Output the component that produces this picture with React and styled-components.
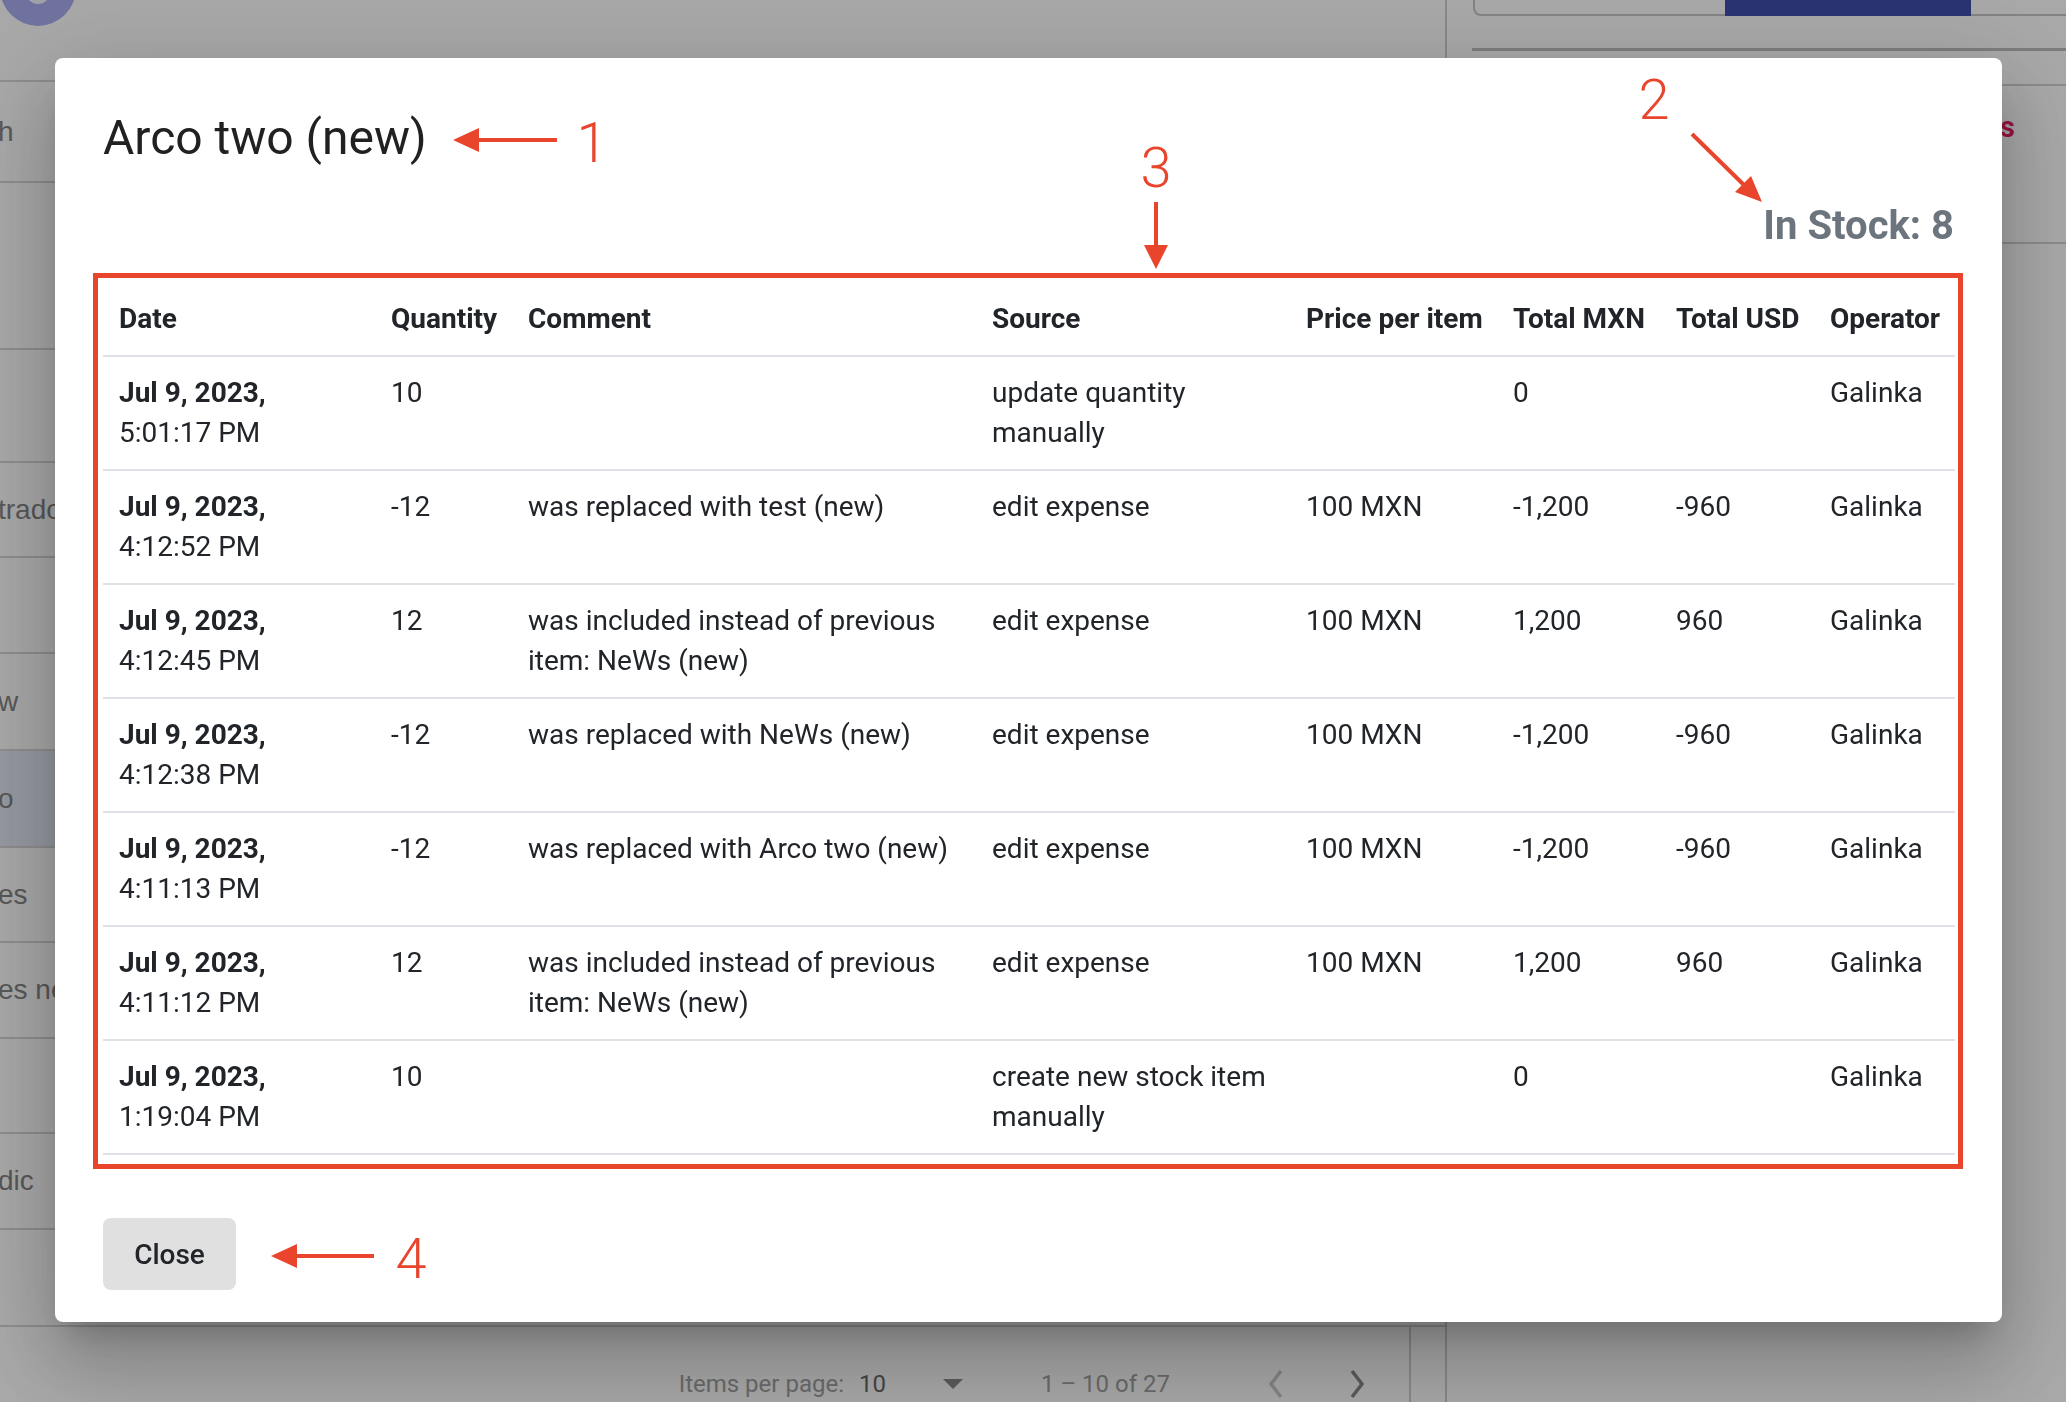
import React from "react";
import styled, { createGlobalStyle } from "styled-components";

const GlobalStyle = createGlobalStyle`
  * { box-sizing: border-box; }
  html, body { margin: 0; padding: 0; }
  body {
    width: 2066px;
    height: 1402px;
    overflow: hidden;
    background: #ffffff;
    font-family: Roboto, "Liberation Sans", Arial, sans-serif;
  }
`;

/* ---------- page behind the dialog ---------- */

const Page = styled.div`
  display: grid;
  grid-template-columns: 1447px 1fr;
  height: 1402px;
`;

const Main = styled.div`
  display: flex;
  flex-direction: column;
  border-right: 2px solid #cfcfcf;
  overflow: hidden;
`;

const TopBar = styled.div`
  height: 82px;
  flex: none;
  border-bottom: 2px solid #d6d6d6;
`;

const Avatar = styled.div`
  width: 76px;
  height: 76px;
  margin-top: -50px;
  border-radius: 50%;
  background: #a9aef0;
  display: flex;
  justify-content: center;
  overflow: hidden;
`;

const AvatarGlyph = styled.div`
  width: 24px;
  height: 24px;
  margin-top: 30px;
  border-radius: 50%;
  background: #f4f4fb;
`;

const ListRow = styled.div`
  height: ${(p) => p.$h}px;
  flex: none;
  display: flex;
  align-items: center;
  border-bottom: 2px solid #d6d6d6;
  background: ${(p) => (p.$active ? "#e4e8f4" : "transparent")};
  font-family: "Liberation Sans", Arial, sans-serif;
  font-size: 28px;
  color: #858585;
  white-space: nowrap;
`;

const ListText = styled.span`
  margin-left: -2px;
`;

const Footer = styled.div`
  flex: 1;
  margin-right: 34px;
  border-right: 2px solid #d0d0d0;
  display: flex;
  justify-content: flex-end;
  align-items: flex-start;
  padding: 41px 12px 0 0;
  font-size: 24px;
  line-height: 32px;
  color: #a2a2a2;
`;

const PerPage = styled.span``;

const PageSelect = styled.div`
  display: flex;
  align-items: center;
  justify-content: space-between;
  width: 104px;
  margin-left: 15px;
  color: #6a6a6a;
`;

const RangeText = styled.span`
  margin-left: 78px;
`;

const PageButton = styled.div`
  width: 80px;
  height: 32px;
  display: flex;
  align-items: center;
  justify-content: center;
  margin-left: ${(p) => p.$gap || 0}px;
`;

const Side = styled.div`
  display: flex;
  flex-direction: column;
  padding-left: 25px;
  overflow: hidden;
`;

const TopCard = styled.div`
  height: 16px;
  margin-left: 1px;
  margin-right: -20px;
  border: 2px solid #c7c7c7;
  border-top: none;
  border-right: none;
  border-bottom-left-radius: 8px;
  padding-left: 250px;
`;

const CardButton = styled.div`
  width: 246px;
  height: 16px;
  background: #3f4fae;
`;

const Divider = styled.div`
  height: ${(p) => p.$w || 2}px;
  margin-top: ${(p) => p.$top}px;
  background: ${(p) => p.$c || "#d2d2d2"};
`;

const TabRow = styled.div`
  height: 156px;
  display: flex;
  align-items: flex-start;
  padding-top: 21px;
`;

const TabLabel = styled.span`
  width: 543px;
  text-align: right;
  font-size: 29px;
  line-height: 40px;
  font-weight: 700;
  color: #e91e63;
  white-space: nowrap;
`;

/* ---------- dialog ---------- */

const Backdrop = styled.div`
  position: fixed;
  inset: 0;
  background: rgba(0, 0, 0, 0.34);
`;

const Dialog = styled.div`
  position: fixed;
  left: 55px;
  top: 58px;
  width: 1947px;
  background: #ffffff;
  border-radius: 8px;
  box-shadow: 0 22px 30px -14px rgba(0, 0, 0, 0.2),
    0 48px 76px 6px rgba(0, 0, 0, 0.14), 0 18px 92px 16px rgba(0, 0, 0, 0.12);
  padding: 52px 48px 32px;
  display: flex;
  flex-direction: column;
`;

const Title = styled.h2`
  margin: 0;
  font-size: 48px;
  line-height: 56px;
  font-weight: 400;
  color: #212121;
`;

const Stock = styled.div`
  align-self: flex-end;
  margin-top: 36px;
  font-size: 40px;
  line-height: 48px;
  font-weight: 700;
  color: #6c757d;
`;

const Highlight = styled.div`
  margin: 23px -9px 0 -10px;
  border: 5px solid #e8452c;
  padding: 5px 3px 9px 5px;
`;

const Table = styled.table`
  width: 100%;
  border-collapse: collapse;
  table-layout: fixed;
  color: #212529;
`;

const HeadCell = styled.th`
  padding: 16px;
  font-size: 28px;
  line-height: 40px;
  font-weight: 700;
  text-align: left;
  white-space: nowrap;
  vertical-align: top;
  border-bottom: 2px solid #dee2e6;
`;

const Cell = styled.td`
  padding: 16px;
  font-size: 28px;
  line-height: 40px;
  font-weight: 400;
  text-align: left;
  vertical-align: top;
  border-bottom: 2px solid #dee2e6;
`;

const DateLine = styled.span`
  display: block;
  font-weight: 700;
`;

const CloseButton = styled.button`
  align-self: flex-start;
  margin-top: 49px;
  width: 133px;
  height: 72px;
  border: none;
  border-radius: 8px;
  background: #e0e0e0;
  font-family: Roboto, "Liberation Sans", sans-serif;
  font-size: 28px;
  font-weight: 500;
  color: #212529;
  cursor: pointer;
`;

/* ---------- annotations drawn over the screenshot ---------- */

const Marks = styled.svg`
  position: fixed;
  left: 0;
  top: 0;
  pointer-events: none;
`;

const MarkNumber = styled.text`
  font-family: Roboto, "Liberation Sans", sans-serif;
  font-size: 56px;
  font-weight: 300;
  fill: #e8452c;
`;

const columns = [272, 137, 464, 314, 207, 163, 154, 141];
const headers = [
  "Date",
  "Quantity",
  "Comment",
  "Source",
  "Price per item",
  "Total MXN",
  "Total USD",
  "Operator",
];

const included = "was included instead of previous item: NeWs (new)";

const history = [
  { time: "5:01:17 PM", qty: "10", comment: "", source: "update quantity manually", price: "", mxn: "0", usd: "" },
  { time: "4:12:52 PM", qty: "-12", comment: "was replaced with test (new)", source: "edit expense", price: "100 MXN", mxn: "-1,200", usd: "-960" },
  { time: "4:12:45 PM", qty: "12", comment: included, source: "edit expense", price: "100 MXN", mxn: "1,200", usd: "960" },
  { time: "4:12:38 PM", qty: "-12", comment: "was replaced with NeWs (new)", source: "edit expense", price: "100 MXN", mxn: "-1,200", usd: "-960" },
  { time: "4:11:13 PM", qty: "-12", comment: "was replaced with Arco two (new)", source: "edit expense", price: "100 MXN", mxn: "-1,200", usd: "-960" },
  { time: "4:11:12 PM", qty: "12", comment: included, source: "edit expense", price: "100 MXN", mxn: "1,200", usd: "960" },
  { time: "1:19:04 PM", qty: "10", comment: "", source: "create new stock item manually", price: "", mxn: "0", usd: "" },
];

const sideList = [
  { h: 101, t: "h" },
  { h: 167, t: "" },
  { h: 113, t: "" },
  { h: 95, t: "trador" },
  { h: 96, t: "" },
  { h: 97, t: "w" },
  { h: 97, t: "o", active: true },
  { h: 95, t: "es" },
  { h: 96, t: "es nev" },
  { h: 95, t: "" },
  { h: 96, t: "dic" },
  { h: 97, t: "" },
];

const Chevron = ({ dir, color }) => (
  <svg width="20" height="32" viewBox="0 0 20 32">
    <path
      d={dir === "left" ? "M15 3 L5 16 L15 29" : "M5 3 L15 16 L5 29"}
      fill="none"
      stroke={color}
      strokeWidth="3.5"
    />
  </svg>
);

const Annotations = () => (
  <Marks width="2066" height="1402" viewBox="0 0 2066 1402">
    <g stroke="#e8452c" strokeWidth="4" fill="#e8452c">
      <line x1="476" y1="140" x2="557" y2="140" />
      <polygon points="453,140 479,128 479,152" stroke="none" />
      <line x1="1692" y1="134" x2="1745" y2="186" />
      <polygon points="1762,202 1735,192 1751,176" stroke="none" />
      <line x1="1156" y1="202" x2="1156" y2="248" />
      <polygon points="1156,269 1144,245 1168,245" stroke="none" />
      <line x1="294" y1="1256" x2="374" y2="1256" />
      <polygon points="271,1256 297,1244 297,1268" stroke="none" />
    </g>
    <MarkNumber x="592" y="162" textAnchor="middle">1</MarkNumber>
    <MarkNumber x="1654" y="119" textAnchor="middle">2</MarkNumber>
    <MarkNumber x="1156" y="187" textAnchor="middle">3</MarkNumber>
    <MarkNumber x="411" y="1278" textAnchor="middle">4</MarkNumber>
  </Marks>
);

const App = () => {
  return (
    <>
      <GlobalStyle />
      <Page>
        <Main>
          <TopBar>
            <Avatar>
              <AvatarGlyph />
            </Avatar>
          </TopBar>
          {sideList.map((row, i) => (
            <ListRow key={i} $h={row.h} $active={row.active}>
              <ListText>{row.t}</ListText>
            </ListRow>
          ))}
          <Footer>
            <PerPage>Items per page:</PerPage>
            <PageSelect>
              <span>10</span>
              <svg width="20" height="10" viewBox="0 0 20 10">
                <polygon points="0,0 20,0 10,10" fill="#8a8a8a" />
              </svg>
            </PageSelect>
            <RangeText>1 – 10 of 27</RangeText>
            <PageButton $gap={66}>
              <Chevron dir="left" color="#c9c9c9" />
            </PageButton>
            <PageButton $gap={1}>
              <Chevron dir="right" color="#8a8a8a" />
            </PageButton>
          </Footer>
        </Main>
        <Side>
          <TopCard>
            <CardButton />
          </TopCard>
          <Divider $top={32} $w={3} $c="#bdbdbd" />
          <Divider $top={33} />
          <TabRow>
            <TabLabel>Movements</TabLabel>
          </TabRow>
          <Divider $top={0} />
        </Side>
      </Page>

      <Backdrop />

      <Dialog>
        <Title>Arco two (new)</Title>
        <Stock>In Stock: 8</Stock>
        <Highlight>
          <Table>
            <colgroup>
              {columns.map((w, i) => (
                <col key={i} style={{ width: w }} />
              ))}
            </colgroup>
            <thead>
              <tr>
                {headers.map((h) => (
                  <HeadCell key={h}>{h}</HeadCell>
                ))}
              </tr>
            </thead>
            <tbody>
              {history.map((r, i) => (
                <tr key={i}>
                  <Cell>
                    <DateLine>Jul 9, 2023,</DateLine>
                    {r.time}
                  </Cell>
                  <Cell>{r.qty}</Cell>
                  <Cell>{r.comment}</Cell>
                  <Cell>{r.source}</Cell>
                  <Cell>{r.price}</Cell>
                  <Cell>{r.mxn}</Cell>
                  <Cell>{r.usd}</Cell>
                  <Cell>Galinka</Cell>
                </tr>
              ))}
            </tbody>
          </Table>
        </Highlight>
        <CloseButton>Close</CloseButton>
      </Dialog>

      <Annotations />
    </>
  );
};

export default App;
